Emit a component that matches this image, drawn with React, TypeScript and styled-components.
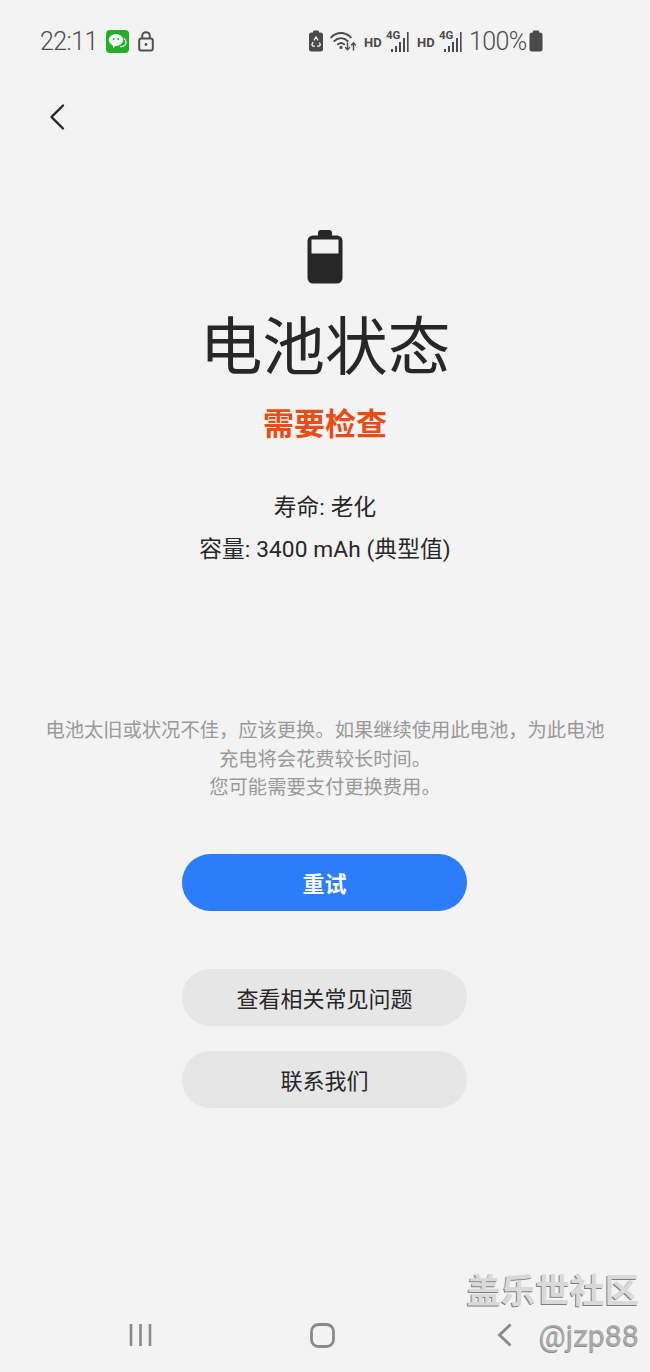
import React from 'react';
import styled, { createGlobalStyle } from 'styled-components';

const GlobalStyle = createGlobalStyle`
  html, body {
    margin: 0;
    padding: 0;
    background: #f3f3f3;
  }
  * {
    box-sizing: border-box;
  }
`;

const FONT = `Roboto, "Noto Sans CJK SC", sans-serif`;

const Page = styled.div`
  position: relative;
  width: 650px;
  height: 1372px;
  overflow: hidden;
  background: #f3f3f3;
  color: #272727;
  font-family: ${FONT};
  display: flex;
  flex-direction: column;
`;

const StatusBar = styled.div`
  height: 82px;
  padding: 0 107px 0 40px;
  display: flex;
  align-items: center;
  justify-content: space-between;
  color: #4c4c4c;
`;

const StatusGroup = styled.div<{ $gap: number }>`
  display: flex;
  align-items: center;
  gap: ${({ $gap }) => $gap}px;
`;

const Clock = styled.span`
  width: 57px;
  font-size: 25px;
  font-weight: 300;
  letter-spacing: -0.6px;
  line-height: 1;
`;

const Battery = styled.span`
  width: 56px;
  font-size: 25px;
  font-weight: 300;
  line-height: 1;
  letter-spacing: -0.6px;
  white-space: nowrap;
`;

const BackRow = styled.div`
  height: 70px;
  padding-left: 48px;
  display: flex;
  align-items: center;
`;

const Main = styled.main`
  display: flex;
  flex-direction: column;
  align-items: center;
  padding-top: 78px;
`;

const Title = styled.h1`
  margin: 22px 0 0;
  font-size: 62.7px;
  line-height: 84px;
  font-weight: 400;
  color: #272727;
`;

const Subtitle = styled.h2`
  margin: 13px 0 0;
  font-size: 31px;
  line-height: 44px;
  font-weight: 700;
  color: #e94c14;
`;

const Specs = styled.div`
  margin-top: 40px;
  font-size: 22.7px;
  letter-spacing: 0.1px;
  line-height: 42px;
  text-align: center;
`;

const Notice = styled.p`
  margin: 146px 0 0;
  width: 570px;
  font-size: 19.3px;
  line-height: 28.6px;
  text-align: center;
  color: #999999;
`;

const Actions = styled.div`
  margin-top: 51px;
  padding-right: 1px;
  display: flex;
  flex-direction: column;
  align-items: center;
`;

const Pill = styled.button<{ $primary?: boolean; $gapTop: number }>`
  width: 285px;
  height: 57px;
  margin-top: ${({ $gapTop }) => $gapTop}px;
  border: none;
  border-radius: 29px;
  font-family: ${FONT};
  font-size: 22px;
  padding: 0 0 1px;
  font-weight: ${({ $primary }) => ($primary ? 700 : 400)};
  background: ${({ $primary }) => ($primary ? '#2b7dfb' : '#e6e6e6')};
  color: ${({ $primary }) => ($primary ? '#fafafa' : '#272727')};
`;

const NavBar = styled.nav`
  margin-top: auto;
  height: 49px;
  padding: 0 0 0 129px;
  display: flex;
  align-items: flex-start;
`;

const NavSlot = styled.div<{ $width: number }>`
  width: ${({ $width }) => $width}px;
  display: flex;
`;

const Watermark = styled.div`
  position: absolute;
  right: 11px;
  bottom: 18px;
  display: flex;
  flex-direction: column;
  align-items: flex-end;
  gap: 6px;
`;

const WatermarkTitle = styled.div`
  font-size: 34.5px;
  font-weight: 700;
  line-height: 42px;
  white-space: nowrap;
  color: #d9d9d9;
  text-shadow: -1px 1px 0 #7d7d7d;
`;

const WatermarkHandle = styled.div`
  font-size: 30.2px;
  line-height: 36px;
  color: #ababab;
  text-shadow: -0.5px 0.5px 0 #8a8a8a;
`;

const RecycleBatteryIcon = () => (
  <svg width="14" height="22" viewBox="0 0 14 22">
    <rect x="4" y="0.5" width="6" height="3" rx="1" fill="#4a4a4a" />
    <rect x="0" y="2.5" width="14" height="19" rx="2.5" fill="#4a4a4a" />
    <path d="M5 10.4l2-3.4 2 3.4M10.4 12.4l1 2.4-1.4 1.4H8M6 16.2H3.8l-1-1.6 1.4-2.4" fill="none" stroke="#f3f3f3" strokeWidth="1.3" />
  </svg>
);

const WifiIcon = () => (
  <svg width="26" height="22" viewBox="0 0 26 22" fill="none" stroke="#4a4a4a" strokeWidth="1.9" strokeLinecap="round">
    <path d="M1.2 7.4C6.8 1.6 15 1.6 20.8 7.4" />
    <path d="M4.4 11C8.2 7.2 13.8 7.2 17.6 11" />
    <path d="M7.8 14.4C9.8 12.6 12.2 12.6 14.2 14.4" />
    <circle cx="11" cy="17.4" r="0.7" fill="#4a4a4a" />
    <path d="M17.5 13v6.6M15.5 17.6l2 2.2 2-2.2" strokeWidth="1.4" />
    <path d="M23.5 20v-7M21.5 15l2-2.2 2 2.2" strokeWidth="1.4" />
  </svg>
);

const SignalIcon = () => (
  <svg width="23" height="26" viewBox="0 0 23 26">
    <text x="0" y="11" fontFamily="Roboto, sans-serif" fontWeight="700" fontSize="11.5" fill="#4a4a4a">4G</text>
    <rect x="5" y="21" width="2" height="3" fill="#4a4a4a" />
    <rect x="9" y="18" width="2" height="6" fill="#4a4a4a" />
    <rect x="13" y="14" width="2" height="10" fill="#4a4a4a" />
    <rect x="17" y="10" width="2" height="14" fill="#4a4a4a" />
    <rect x="21" y="4" width="1.6" height="20" fill="#4a4a4a" />
  </svg>
);

const HdLabel = styled.span`
  width: 16px;
  margin-left: 1px;
  margin-right: -1px;
  font-size: 13px;
  font-weight: 700;
  color: #4a4a4a;
  line-height: 1;
  margin-top: 3px;
`;

const WeChatIcon = () => (
  <svg width="23" height="23" viewBox="0 0 23 23">
    <rect width="23" height="23" rx="4" fill="#22b02c" />
    <ellipse cx="10" cy="10" rx="7.2" ry="6" fill="#f4f8f4" />
    <path d="M6.5 14.5l0.6 3.6 3-2.6z" fill="#f4f8f4" />
    <circle cx="7.6" cy="9" r="1" fill="#22b02c" />
    <circle cx="12.2" cy="9" r="1" fill="#22b02c" />
    <path d="M17.8 8.5c2.4 1.6 3 4.4 1.2 6.4-1.2 1.4-3.2 2-5 1.8" fill="none" stroke="#f4f8f4" strokeWidth="1.2" />
  </svg>
);

const LockIcon = () => (
  <svg width="16" height="21" viewBox="0 0 16 21" fill="none" stroke="#505050" strokeWidth="2">
    <rect x="1.2" y="7.5" width="13.6" height="12" rx="2" />
    <path d="M4.2 7.5V5a3.8 3.8 0 0 1 7.6 0v2.5" />
    <circle cx="8" cy="13.5" r="1.4" fill="#505050" stroke="none" />
  </svg>
);

const SmallBattery = styled.svg`
  margin-left: -3px;
`;

const SmallBatteryIcon = () => (
  <SmallBattery width="14" height="22" viewBox="0 0 14 22">
    <rect x="4" y="0.5" width="6" height="3" rx="1" fill="#4a4a4a" />
    <rect x="0.5" y="2.5" width="13" height="19" rx="2.5" fill="#4a4a4a" />
  </SmallBattery>
);

const BackIcon = () => (
  <svg width="18" height="28" viewBox="0 0 18 28" fill="none" stroke="#272727" strokeWidth="2.4" strokeLinecap="round" strokeLinejoin="round">
    <path d="M15 2.5L3.5 14 15 25.5" />
  </svg>
);

const BigBatteryIcon = () => (
  <svg width="36" height="54" viewBox="0 0 36 54">
    <rect x="11" y="0" width="14" height="8" rx="3" fill="#272727" />
    <rect x="0.5" y="5.5" width="35" height="48" rx="5.5" fill="#272727" />
    <rect x="4.5" y="9.5" width="27" height="14" fill="#f3f3f3" />
  </svg>
);

const RecentsIcon = () => (
  <svg width="23" height="24" viewBox="0 0 23 24" fill="none" stroke="#8a8a8a" strokeWidth="2.6">
    <path d="M2 1v22M11.5 1v22M21 1v22" />
  </svg>
);

const HomeIcon = () => (
  <svg width="25" height="25" viewBox="0 0 25 25" fill="none" stroke="#8a8a8a" strokeWidth="2.8">
    <rect x="1.5" y="1.5" width="22" height="22" rx="7" />
  </svg>
);

const NavBackIcon = () => (
  <svg width="15" height="24" viewBox="0 0 15 24" fill="none" stroke="#8a8a8a" strokeWidth="2.8">
    <path d="M13.5 1.5L2.5 12l11 10.5" />
  </svg>
);

const App = () => (
  <Page>
    <GlobalStyle />
    <StatusBar>
      <StatusGroup $gap={9}>
        <Clock>22:11</Clock>
        <WeChatIcon />
        <LockIcon />
      </StatusGroup>
      <StatusGroup $gap={7}>
        <RecycleBatteryIcon />
        <WifiIcon />
        <HdLabel>HD</HdLabel>
        <SignalIcon />
        <HdLabel>HD</HdLabel>
        <SignalIcon />
        <Battery>100%</Battery>
        <SmallBatteryIcon />
      </StatusGroup>
    </StatusBar>
    <BackRow>
      <BackIcon />
    </BackRow>
    <Main>
      <BigBatteryIcon />
      <Title>电池状态</Title>
      <Subtitle>需要检查</Subtitle>
      <Specs>
        <div>寿命: 老化</div>
        <div>容量: 3400 mAh (典型值)</div>
      </Specs>
      <Notice>
        电池太旧或状况不佳，应该更换。如果继续使用此电池，为此电池充电将会花费较长时间。
        <br />
        您可能需要支付更换费用。
      </Notice>
      <Actions>
        <Pill $primary $gapTop={0}>重试</Pill>
        <Pill $gapTop={58}>查看相关常见问题</Pill>
        <Pill $gapTop={25}>联系我们</Pill>
      </Actions>
    </Main>
    <NavBar>
      <NavSlot $width={181}><RecentsIcon /></NavSlot>
      <NavSlot $width={187}><HomeIcon /></NavSlot>
      <NavSlot $width={40}><NavBackIcon /></NavSlot>
    </NavBar>
    <Watermark>
      <WatermarkTitle>盖乐世社区</WatermarkTitle>
      <WatermarkHandle>@jzp88</WatermarkHandle>
    </Watermark>
  </Page>
);

export default App;
